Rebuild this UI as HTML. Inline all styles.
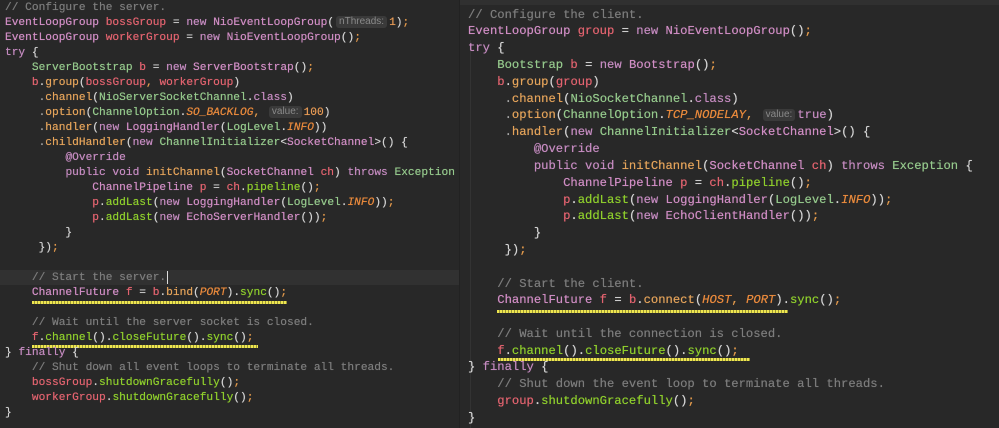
<!DOCTYPE html>
<html><head><meta charset="utf-8"><style>
html,body{margin:0;padding:0;background:#282828;width:999px;height:428px;overflow:hidden}
.p{position:absolute;top:0;bottom:0;background:#282828;overflow:hidden}
.l{position:absolute;white-space:pre;font-family:"Liberation Mono","DejaVu Sans Mono",monospace;color:#d4d4d4;text-shadow:0 0 0.5px currentColor}
#L .l{font-size:11.2px;left:5px;height:15px;line-height:15px}
#R .l{font-size:12.2px;left:468px;height:17px;line-height:17px}
.c{color:#7c7c7c}
.t{color:#d08dc4}
.k{color:#c58bc0}
.v{color:#e2636f}
.g{color:#95c98c}
.m{color:#e4a35a}
.f{color:#8fcf2c}
.i{color:#ea8a3c;font-style:italic}
.n{color:#e89b55}
.s{color:#e39a4c}
.d{color:#a8a8a8}
.h{display:inline-block;background:#3a3a3a;color:#8a8a8a;font-family:"Liberation Sans",sans-serif;font-size:10px;line-height:12px;padding:0 3px;border-radius:3px;margin:0 2px;vertical-align:1px;text-shadow:none}
.sq{position:absolute;height:3px;background:repeating-linear-gradient(90deg,#eee650 0 2px,#9a9535 2px 3px)}
</style></head><body>
<div class="p" id="L" style="left:0;width:459px">
<div style="position:absolute;left:0;top:270px;width:459px;height:15px;background:#313131"></div>
<div style="position:absolute;left:167px;top:271px;width:1px;height:13px;background:#ddd"></div>
<div class="l" style="top:1px"><span class="c">// Configure the server.</span></div>
<div class="l" style="top:16px"><span class="t">EventLoopGroup</span> <span class="v">bossGroup</span> = <span class="k">new</span> <span class="t">NioEventLoopGroup</span>(<span class="h">nThreads:</span><span class="n">1</span>)<span class="s">;</span></div>
<div class="l" style="top:31px"><span class="t">EventLoopGroup</span> <span class="v">workerGroup</span> = <span class="k">new</span> <span class="t">NioEventLoopGroup</span>()<span class="s">;</span></div>
<div class="l" style="top:46px"><span class="k">try</span> {</div>
<div class="l" style="top:61px">    <span class="g">ServerBootstrap</span> <span class="v">b</span> = <span class="k">new</span> <span class="t">ServerBootstrap</span>()<span class="s">;</span></div>
<div class="l" style="top:76px">    <span class="v">b</span>.<span class="m">group</span>(<span class="v">bossGroup</span><span class="s">,</span> <span class="v">workerGroup</span>)</div>
<div class="l" style="top:91px">     <span class="d">.</span><span class="m">channel</span>(<span class="g">NioServerSocketChannel</span>.<span class="k">class</span>)</div>
<div class="l" style="top:106px">     <span class="d">.</span><span class="m">option</span>(<span class="g">ChannelOption</span>.<span class="i">SO_BACKLOG</span><span class="s">,</span> <span class="h">value:</span><span class="n">100</span>)</div>
<div class="l" style="top:121px">     <span class="d">.</span><span class="m">handler</span>(<span class="k">new</span> <span class="t">LoggingHandler</span>(<span class="g">LogLevel</span>.<span class="i">INFO</span>))</div>
<div class="l" style="top:136px">     <span class="d">.</span><span class="m">childHandler</span>(<span class="k">new</span> <span class="g">ChannelInitializer</span>&lt;<span class="t">SocketChannel</span>&gt;() {</div>
<div class="l" style="top:151px">         <span class="k">@Override</span></div>
<div class="l" style="top:166px">         <span class="k">public void</span> <span class="m">initChannel</span>(<span class="t">SocketChannel</span> <span class="v">ch</span>) <span class="k">throws</span> <span class="g">Exception</span> {</div>
<div class="l" style="top:181px">             <span class="t">ChannelPipeline</span> <span class="v">p</span> = <span class="v">ch</span>.<span class="f">pipeline</span>()<span class="s">;</span></div>
<div class="l" style="top:196px">             <span class="v">p</span>.<span class="f">addLast</span>(<span class="k">new</span> <span class="t">LoggingHandler</span>(<span class="g">LogLevel</span>.<span class="i">INFO</span>))<span class="s">;</span></div>
<div class="l" style="top:211px">             <span class="v">p</span>.<span class="f">addLast</span>(<span class="k">new</span> <span class="t">EchoServerHandler</span>())<span class="s">;</span></div>
<div class="l" style="top:226px">         }</div>
<div class="l" style="top:241px">     })<span class="s">;</span></div>
<div class="l" style="top:271px">    <span class="c">// Start the server.</span></div>
<div class="l" style="top:286px">    <span class="t">ChannelFuture</span> <span class="v">f</span> = <span class="v">b</span>.<span class="m">bind</span>(<span class="i">PORT</span>).<span class="f">sync</span>()<span class="s">;</span></div>
<div class="sq" style="left:32px;top:301px;width:255px"></div>
<div class="l" style="top:316px">    <span class="c">// Wait until the server socket is closed.</span></div>
<div class="l" style="top:331px">    <span class="v">f</span>.<span class="f">channel</span>().<span class="f">closeFuture</span>().<span class="f">sync</span>()<span class="s">;</span></div>
<div class="sq" style="left:32px;top:345px;width:226px"></div>
<div class="l" style="top:346px">} <span class="k">finally</span> {</div>
<div class="l" style="top:361px">    <span class="c">// Shut down all event loops to terminate all threads.</span></div>
<div class="l" style="top:376px">    <span class="v">bossGroup</span>.<span class="f">shutdownGracefully</span>()<span class="s">;</span></div>
<div class="l" style="top:391px">    <span class="v">workerGroup</span>.<span class="f">shutdownGracefully</span>()<span class="s">;</span></div>
<div class="l" style="top:406px">}</div>
</div>
<div class="p" style="left:459px;width:540px;border-left:1px solid #222">
<div style="position:absolute;left:0;top:0;width:540px;height:5px;background:#303030"></div>
<div style="position:absolute;left:10px;top:40px;width:1px;height:388px;background:#333"></div>
</div>
<div class="p" style="left:0;width:999px;background:none">
<div id="R" style="position:absolute;inset:0">
<div class="l" style="top:7px"><span class="c">// Configure the client.</span></div>
<div class="l" style="top:23px"><span class="t">EventLoopGroup</span> <span class="v">group</span> = <span class="k">new</span> <span class="t">NioEventLoopGroup</span>()<span class="s">;</span></div>
<div class="l" style="top:40px"><span class="k">try</span> {</div>
<div class="l" style="top:57px">    <span class="g">Bootstrap</span> <span class="v">b</span> = <span class="k">new</span> <span class="t">Bootstrap</span>()<span class="s">;</span></div>
<div class="l" style="top:74px">    <span class="v">b</span>.<span class="m">group</span>(<span class="v">group</span>)</div>
<div class="l" style="top:91px">     <span class="d">.</span><span class="m">channel</span>(<span class="g">NioSocketChannel</span>.<span class="k">class</span>)</div>
<div class="l" style="top:107px">     <span class="d">.</span><span class="m">option</span>(<span class="g">ChannelOption</span>.<span class="i">TCP_NODELAY</span><span class="s">,</span> <span class="h">value:</span><span class="k">true</span>)</div>
<div class="l" style="top:124px">     <span class="d">.</span><span class="m">handler</span>(<span class="k">new</span> <span class="g">ChannelInitializer</span>&lt;<span class="t">SocketChannel</span>&gt;() {</div>
<div class="l" style="top:141px">         <span class="k">@Override</span></div>
<div class="l" style="top:158px">         <span class="k">public void</span> <span class="m">initChannel</span>(<span class="t">SocketChannel</span> <span class="v">ch</span>) <span class="k">throws</span> <span class="g">Exception</span> {</div>
<div class="l" style="top:175px">             <span class="t">ChannelPipeline</span> <span class="v">p</span> = <span class="v">ch</span>.<span class="f">pipeline</span>()<span class="s">;</span></div>
<div class="l" style="top:192px">             <span class="v">p</span>.<span class="f">addLast</span>(<span class="k">new</span> <span class="t">LoggingHandler</span>(<span class="g">LogLevel</span>.<span class="i">INFO</span>))<span class="s">;</span></div>
<div class="l" style="top:208px">             <span class="v">p</span>.<span class="f">addLast</span>(<span class="k">new</span> <span class="t">EchoClientHandler</span>())<span class="s">;</span></div>
<div class="l" style="top:225px">         }</div>
<div class="l" style="top:242px">     })<span class="s">;</span></div>
<div class="l" style="top:276px">    <span class="c">// Start the client.</span></div>
<div class="l" style="top:292px">    <span class="t">ChannelFuture</span> <span class="v">f</span> = <span class="v">b</span>.<span class="m">connect</span>(<span class="i">HOST</span><span class="s">,</span> <span class="i">PORT</span>).<span class="f">sync</span>()<span class="s">;</span></div>
<div class="sq" style="left:497px;top:310px;width:291px"></div>
<div class="l" style="top:326px">    <span class="c">// Wait until the connection is closed.</span></div>
<div class="l" style="top:343px">    <span class="v">f</span>.<span class="f">channel</span>().<span class="f">closeFuture</span>().<span class="f">sync</span>()<span class="s">;</span></div>
<div class="sq" style="left:498px;top:358px;width:252px"></div>
<div class="l" style="top:359px">} <span class="k">finally</span> {</div>
<div class="l" style="top:376px">    <span class="c">// Shut down the event loop to terminate all threads.</span></div>
<div class="l" style="top:393px">    <span class="v">group</span>.<span class="f">shutdownGracefully</span>()<span class="s">;</span></div>
<div class="l" style="top:410px">}</div>
</div>
</div>
</body></html>
